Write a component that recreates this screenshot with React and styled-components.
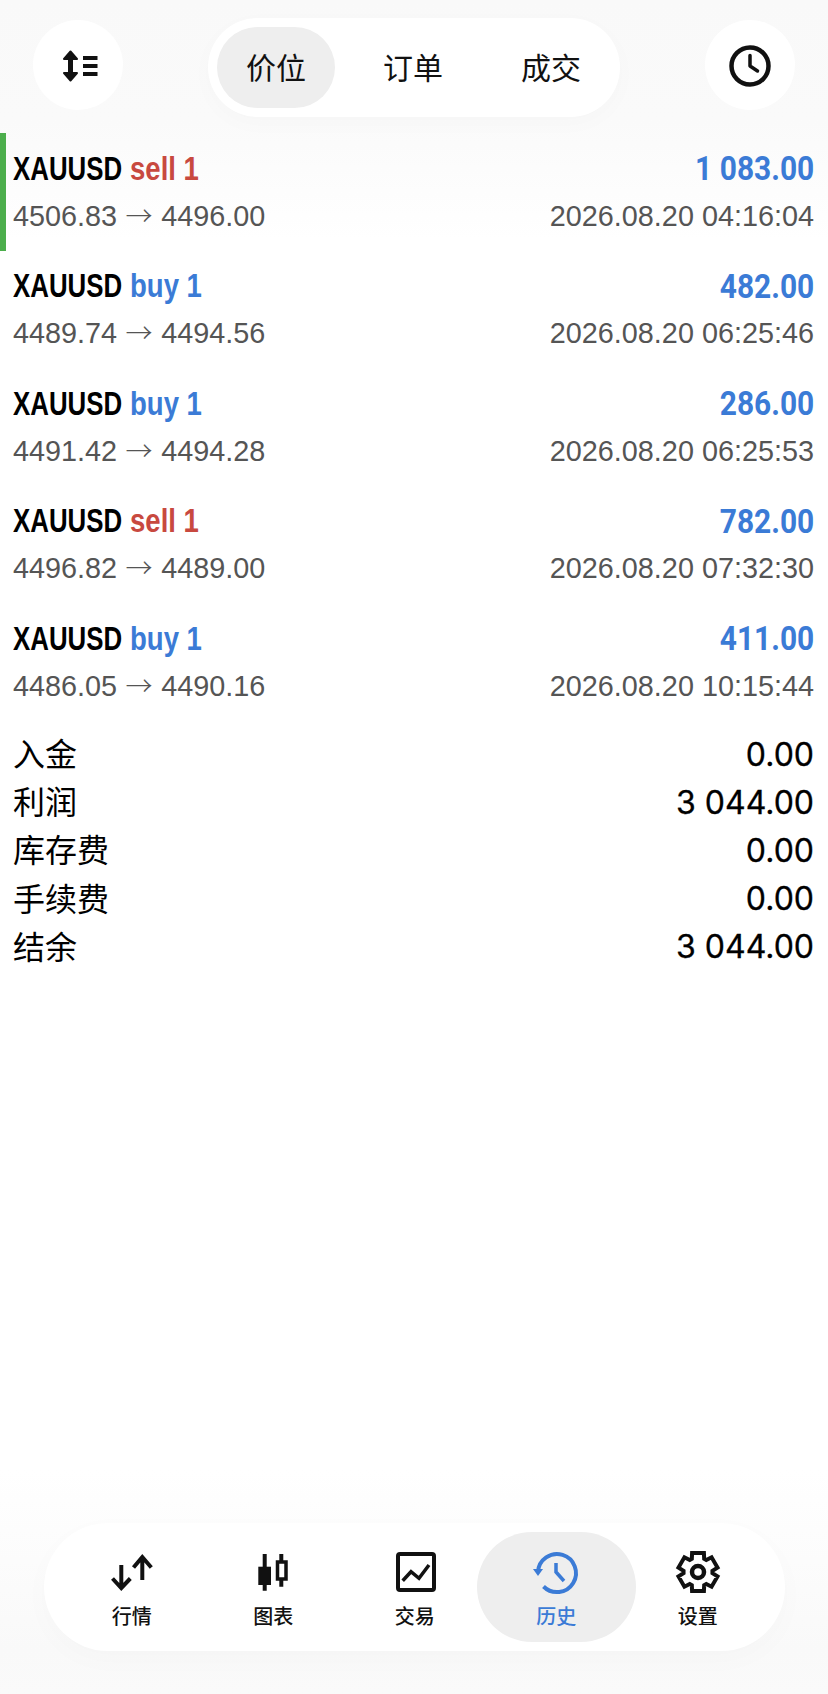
import React from "react";
import styled, { createGlobalStyle } from "styled-components";

const Global = createGlobalStyle`
  html, body { margin: 0; padding: 0; background: #fff; }
  * { box-sizing: border-box; }
`;

const CJK = '"Noto Sans CJK SC", sans-serif';
const BLUE = "#3b7bd6";
const RED = "#c8493f";
const INK = "#111";

const Page = styled.div`
  width: 828px;
  height: 1694px;
  display: flex;
  flex-direction: column;
  overflow: hidden;
  font-family: "Liberation Sans", ${CJK};
  background: linear-gradient(
    to bottom,
    #f9f9f9 0,
    #fafafa 120px,
    #ffffff 240px,
    #ffffff 1470px,
    #f9f9f9 1650px,
    #fafafa 100%
  );
`;

const TopBar = styled.header`
  height: 133px;
  flex: none;
  padding: 18px 33px 0 33px;
  display: flex;
  justify-content: space-between;
  align-items: flex-start;
`;

const RoundButton = styled.div`
  width: 90px;
  height: 90px;
  margin-top: 2px;
  padding-top: 2px;
  border-radius: 50%;
  background: #fff;
  display: flex;
  align-items: center;
  justify-content: center;
  color: ${INK};
`;

const Segments = styled.div`
  width: 412px;
  height: 99px;
  border-radius: 50px;
  background: #fff;
  padding: 9px 0 9px 9px;
  display: flex;
  align-items: stretch;
  box-shadow: 0 6px 24px rgba(0, 0, 0, 0.02);
`;

const Segment = styled.div`
  width: ${(p) => (p.$active ? 118 : 138)}px;
  margin-right: ${(p) => (p.$active ? 9 : 0)}px;
  padding-bottom: 3px;
  border-radius: 41px;
  background: ${(p) => (p.$active ? "#eeeeee" : "transparent")};
  display: flex;
  align-items: center;
  justify-content: center;
  font-family: ${CJK};
  font-size: 30px;
  color: ${INK};
`;

const List = styled.section`
  display: flex;
  flex-direction: column;
`;

const Row = styled.div`
  height: 117.6px;
  padding: 14px 14px 0 13px;
  position: relative;
  display: grid;
  grid-template-columns: 1fr auto;
  grid-template-rows: 42px 54px;
  align-items: center;
`;

const Marker = styled.span`
  position: absolute;
  left: 0;
  top: 0;
  bottom: 0;
  width: 6px;
  background: #4cae4c;
`;

const Title = styled.div`
  font-family: "Liberation Sans", sans-serif;
  font-weight: 700;
  font-size: 34px;
  color: #000;
  white-space: pre;
  display: flex;
`;

const Symbol = styled.span`
  display: inline-block;
  transform: scaleX(0.76);
  transform-origin: left center;
  margin-right: -27px;
`;

const Side = styled.span`
  display: inline-block;
  transform: scaleX(0.81);
  transform-origin: left center;
  color: ${(p) => (p.$side === "sell" ? RED : BLUE)};
`;

const Profit = styled.div`
  font-family: Roboto, sans-serif;
  font-weight: 700;
  font-size: 34px;
  color: ${BLUE};
  text-align: right;
  transform: scaleX(0.88);
  transform-origin: right center;
`;

const Sub = styled.div`
  font-size: 28.8px;
  color: #555;
  white-space: pre;
`;

const Arrow = styled.span`
  font-family: ${CJK};
  font-weight: 300;
  font-size: 27px;
  line-height: 1;
  margin: 0 0.5px;
`;

const Summary = styled.section`
  padding: 7px 14px 0 13px;
  display: flex;
  flex-direction: column;
`;

const SummaryRow = styled.div`
  height: 48.2px;
  display: flex;
  align-items: center;
  justify-content: space-between;
  color: #000;
`;

const SummaryLabel = styled.span`
  font-family: ${CJK};
  font-size: 32px;
`;

const SummaryValue = styled.span`
  font-family: Inter, sans-serif;
  font-weight: 400;
  font-size: 32px;
  padding-top: 4px;
  -webkit-text-stroke: 0.3px #000;
`;

const Nav = styled.nav`
  margin: auto 43px 43px 44px;
  height: 128px;
  border-radius: 64px;
  background: #fff;
  padding: 9px 17px;
  display: grid;
  grid-template-columns: repeat(5, 141.5px);
  box-shadow: 0 8px 30px rgba(0, 0, 0, 0.02);
`;

const NavItem = styled.div`
  margin: ${(p) => (p.$active ? "0 -9px" : "0")};
  border-radius: 55px;
  background: ${(p) => (p.$active ? "#eeeeee" : "transparent")};
  color: ${(p) => (p.$active ? BLUE : INK)};
  display: flex;
  flex-direction: column;
  align-items: center;
  padding-top: 19px;
`;

const NavLabel = styled.span`
  font-family: ${CJK};
  font-size: 20px;
  font-weight: 500;
  line-height: 26px;
  margin-top: 10px;
`;

const Svg = styled.svg`
  display: block;
  overflow: visible;
  flex: none;
`;

const Icon = ({ size = 42, children }) => (
  <Svg
    width={size}
    height={size}
    viewBox="0 0 42 42"
    fill="none"
    stroke="currentColor"
    strokeWidth="4"
  >
    {children}
  </Svg>
);

const gearPath = (() => {
  const c = 21, ro = 20, ri = 14.5, n = 6;
  const pts = [];
  for (let i = 0; i < n; i++) {
    const a = (i * 2 * Math.PI) / n - Math.PI / 2;
    const w = 0.3, g = 0.44;
    [[ri, -g], [ro, -w], [ro, w], [ri, g]].forEach(([r, d]) => {
      pts.push(`${(c + r * Math.cos(a + d)).toFixed(2)} ${(c + r * Math.sin(a + d)).toFixed(2)}`);
    });
  }
  return "M" + pts.join("L") + "Z";
})();

const SortIcon = () => (
  <Svg width="42" height="42" viewBox="0 0 42 42" fill="none" stroke="currentColor" strokeWidth="4">
    <path d="M13.5 9v24" strokeWidth="5" />
    <path d="M7 14 13.5 6.5 20 14zM7 28l6.500 7.500L20 28z" fill="currentColor" strokeWidth="2" strokeLinejoin="round" />
    <path d="M26 13h14.500M26 21h14.500M26 29h14.500" />
  </Svg>
);

const ClockIcon = () => (
  <Icon>
    <circle cx="21" cy="21" r="18.5" strokeWidth="4.5" />
    <path d="M21 10.500V21l7.500 5" strokeWidth="3.5" strokeLinecap="round" strokeLinejoin="round" />
  </Icon>
);

const QuotesIcon = () => (
  <Icon>
    <path d="M10.300 14v23M1.500 27.500 10.300 37l9-9.500M31.300 29V6M22.500 16.500 31.300 6l9 10.500" />
  </Icon>
);

const ChartIcon = () => (
  <Icon>
    <path d="M12.700 3v36.700M29.300 3v32.700" />
    <rect x="6.300" y="15.700" width="12.700" height="18.300" fill="currentColor" stroke="none" />
    <rect x="25.500" y="11" width="8.500" height="17" fill="#fff" strokeWidth="3.5" />
  </Icon>
);

const TradeIcon = () => (
  <Icon>
    <rect x="4" y="3" width="36" height="36" rx="2" />
    <path d="M8.700 29.700 17 20.700l8 6.600 10-13.300" strokeWidth="3.5" />
  </Icon>
);

const HistoryIcon = () => (
  <Icon>
    <path d="M3 21A19 19 0 1 1 8.500 35.500" />
    <path d="M-2 18H8L3 25Z" fill="currentColor" stroke="none" />
    <path d="M21 12v9l8 9" strokeWidth="3.5" />
  </Icon>
);

const GearIcon = () => (
  <Icon>
    <path d={gearPath} strokeLinejoin="miter" strokeWidth="4" />
    <circle cx="21" cy="21" r="6" strokeWidth="4.5" />
  </Icon>
);

const trades = [
  { side: "sell", from: "4506.83", to: "4496.00", profit: "1 083.00", time: "2026.08.20 04:16:04", marked: true },
  { side: "buy", from: "4489.74", to: "4494.56", profit: "482.00", time: "2026.08.20 06:25:46" },
  { side: "buy", from: "4491.42", to: "4494.28", profit: "286.00", time: "2026.08.20 06:25:53" },
  { side: "sell", from: "4496.82", to: "4489.00", profit: "782.00", time: "2026.08.20 07:32:30" },
  { side: "buy", from: "4486.05", to: "4490.16", profit: "411.00", time: "2026.08.20 10:15:44" },
];

const summary = [
  ["入金", "0.00"],
  ["利润", "3 044.00"],
  ["库存费", "0.00"],
  ["手续费", "0.00"],
  ["结余", "3 044.00"],
];

const nav = [
  ["行情", QuotesIcon],
  ["图表", ChartIcon],
  ["交易", TradeIcon],
  ["历史", HistoryIcon, true],
  ["设置", GearIcon],
];

export default function App() {
  return (
    <Page>
      <Global />
      <TopBar>
        <RoundButton><SortIcon /></RoundButton>
        <Segments>
          <Segment $active>价位</Segment>
          <Segment>订单</Segment>
          <Segment>成交</Segment>
        </Segments>
        <RoundButton><ClockIcon /></RoundButton>
      </TopBar>
      <List>
        {trades.map((t) => (
          <Row key={t.time}>
            {t.marked && <Marker />}
            <Title><Symbol>XAUUSD</Symbol><Side $side={t.side}>{t.side} 1</Side></Title>
            <Profit>{t.profit}</Profit>
            <Sub>{t.from} <Arrow>→</Arrow> {t.to}</Sub>
            <Sub>{t.time}</Sub>
          </Row>
        ))}
      </List>
      <Summary>
        {summary.map(([k, v]) => (
          <SummaryRow key={k}>
            <SummaryLabel>{k}</SummaryLabel>
            <SummaryValue>{v}</SummaryValue>
          </SummaryRow>
        ))}
      </Summary>
      <Nav>
        {nav.map(([label, I, active]) => (
          <NavItem key={label} $active={active}>
            <I />
            <NavLabel>{label}</NavLabel>
          </NavItem>
        ))}
      </Nav>
    </Page>
  );
}
